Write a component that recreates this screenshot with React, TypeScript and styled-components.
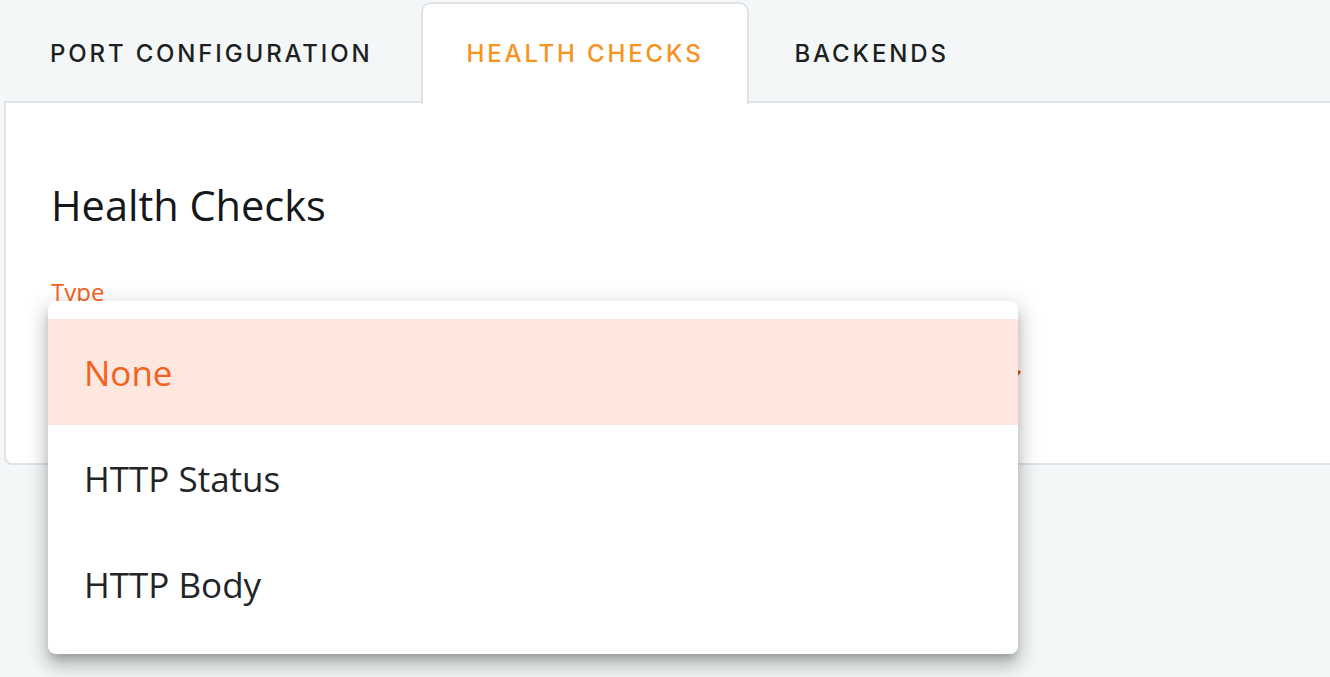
import React, { FunctionComponent } from 'react';
import styled, { createGlobalStyle } from 'styled-components';

const tabs = [
  { label: 'Port Configuration', active: false },
  { label: 'Health Checks', active: true },
  { label: 'Backends', active: false },
];

const options = [
  { label: 'None', selected: true },
  { label: 'HTTP Status', selected: false },
  { label: 'HTTP Body', selected: false },
];

const GlobalStyle = createGlobalStyle`
  body {
    margin: 0;
    background: #f4f7f8;
    font-family: 'Open Sans', 'Noto Sans', sans-serif;
  }
`;

const Page = styled.div`
  position: relative;
  width: 1330px;
  height: 677px;
  overflow: hidden;
  padding-left: 4px;
  box-sizing: border-box;
`;

const TabBar = styled.div`
  display: flex;
  align-items: flex-end;
  height: 103px;
  position: relative;
  z-index: 1;
`;

type TabProps = {
  active: boolean;
};

const Tab = styled.div<TabProps>`
  height: ${({ active }) => (active ? '102px' : '97px')};
  box-sizing: border-box;
  display: flex;
  align-items: center;
  justify-content: center;
  padding: ${({ active }) => (active ? '0 43px 1px 44px' : '0 46px 0 44px')};
  font-family: Inter, 'Liberation Sans', sans-serif;
  font-size: 24px;
  font-weight: 500;
  letter-spacing: 2.85px;
  text-transform: uppercase;
  color: ${({ active }) => (active ? '#f7931e' : '#1d1f21')};
  background: ${({ active }) => (active ? '#ffffff' : 'transparent')};
  border: 2px solid ${({ active }) => (active ? '#dfe2e6' : 'transparent')};
  border-bottom: none;
  border-radius: 10px 10px 0 0;
  margin-bottom: ${({ active }) => (active ? '-1px' : '2px')};
`;

const Panel = styled.div`
  margin-top: -2px;
  margin-right: -20px;
  height: 364px;
  box-sizing: border-box;
  background: #ffffff;
  border: 2px solid #dfe2e6;
  border-radius: 0 0 8px 8px;
  padding: 78px 45px 0;
`;

const Heading = styled.h2`
  margin: 0;
  font-size: 41.5px;
  font-weight: 500;
  line-height: 1.2;
  color: #151719;
`;

const Field = styled.div`
  margin-top: 45px;
  width: 970px;
`;

const Label = styled.div`
  font-size: 24px;
  line-height: 32px;
  color: #f26322;
`;

const SelectBox = styled.div`
  position: relative;
  height: 90px;
`;

const Caret = styled.svg`
  position: absolute;
  right: 0;
  top: 62px;
`;

const Menu = styled.ul`
  position: absolute;
  left: 48px;
  top: 301px;
  width: 970px;
  margin: 0;
  padding: 18px 0 17px;
  list-style: none;
  background: #ffffff;
  border-radius: 8px;
  z-index: 2;
  box-shadow: 0 7px 8px -4px rgba(0, 0, 0, 0.22),
    0 12px 16px 2px rgba(0, 0, 0, 0.14), 0 5px 22px 4px rgba(0, 0, 0, 0.12);
`;

type OptionProps = {
  selected: boolean;
};

const Option = styled.li<OptionProps>`
  height: 106px;
  display: flex;
  align-items: center;
  padding-left: 36px;
  font-size: 35px;
  color: ${({ selected }) => (selected ? '#f26322' : '#222426')};
  background: ${({ selected }) => (selected ? '#fde7df' : 'transparent')};
`;

const App: FunctionComponent = () => {
  return (
    <Page>
      <GlobalStyle />
      <TabBar>
        {tabs.map((tab, i) => (
          <Tab active={tab.active} key={i}>
            {tab.label}
          </Tab>
        ))}
      </TabBar>
      <Panel>
        <Heading>Health Checks</Heading>
        <Field>
          <Label>Type</Label>
          <SelectBox>
            <Caret width='14' height='10' viewBox='0 0 14 10'>
              <path d='M1 1 L7 8 L13 1' stroke='#e0561f' strokeWidth='3' fill='none' />
            </Caret>
          </SelectBox>
        </Field>
      </Panel>
      <Menu>
        {options.map((opt, i) => (
          <Option selected={opt.selected} key={i}>
            {opt.label}
          </Option>
        ))}
      </Menu>
    </Page>
  );
};

export default App;
